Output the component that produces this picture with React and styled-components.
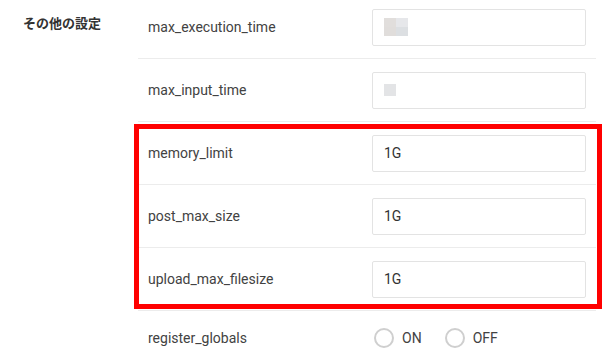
import React from 'react';
import styled, { createGlobalStyle } from 'styled-components';

const GlobalStyle = createGlobalStyle`
  html, body {
    margin: 0;
    padding: 0;
    background: #ffffff;
  }
  body {
    font-family: Roboto, "Noto Sans CJK JP", sans-serif;
    color: #333333;
    overflow: hidden;
  }
`;

const Page = styled.div`
  display: flex;
  width: 607px;
  margin-top: -4px;
`;

const SectionTitle = styled.div`
  width: 138px;
  flex-shrink: 0;
  box-sizing: border-box;
  padding: 17px 0 0 23px;
  font-family: "Noto Sans CJK JP", sans-serif;
  font-size: 13px;
  font-weight: 700;
  line-height: 19px;
  color: #333333;
`;

const Rows = styled.div`
  width: 458px;
  display: flex;
  flex-direction: column;
`;

const Row = styled.div`
  display: flex;
  box-sizing: border-box;
  height: 63px;
  padding: ${(p) => (p.$radio ? '17px 10px 0' : '0 10px')};
  align-items: ${(p) => (p.$radio ? 'flex-start' : 'center')};
  border-bottom: 1px solid #ececec;
`;

const Label = styled.div`
  width: 224px;
  flex-shrink: 0;
  font-size: 14px;
  line-height: 20px;
  color: #424242;
`;

const Input = styled.div`
  width: 214px;
  height: 37px;
  box-sizing: border-box;
  border: 1px solid #e3e3e3;
  border-radius: 2px;
  display: flex;
  align-items: center;
  padding-left: 11px;
  font-size: 14px;
  color: #333333;
`;

const Redacted = styled.div`
  display: grid;
  grid-template-columns: repeat(${(p) => p.$cols}, 12px);
  grid-auto-rows: ${(p) => p.$h}px;
`;

const Pixel = styled.span`
  background: ${(p) => p.$c};
`;

const Highlight = styled.div`
  position: relative;

  &::after {
    content: '';
    position: absolute;
    top: 2px;
    left: -4px;
    right: -6px;
    bottom: 2px;
    border: 5px solid #ff0000;
    pointer-events: none;
  }
`;

const RadioGroup = styled.div`
  display: flex;
  align-items: center;
`;

const RadioOption = styled.label`
  display: flex;
  align-items: center;
  gap: 8px;
  margin-right: 23px;
  font-size: 14px;
  line-height: 20px;
  color: #424242;
`;

const Circle = styled.span`
  width: 20px;
  height: 20px;
  box-sizing: border-box;
  border: 2px solid #cfcfcf;
  border-radius: 50%;
  background: #ffffff;
  margin-left: ${(p) => (p.$first ? '2px' : '0')};
`;

const App = () => {
  return (
    <>
      <GlobalStyle />
      <Page>
        <SectionTitle>その他の設定</SectionTitle>
        <Rows>
          <Row>
            <Label>max_execution_time</Label>
            <Input>
              <Redacted $cols={2} $h={9}>
                <Pixel $c="#e1dedc" />
                <Pixel $c="#e6e7ea" />
                <Pixel $c="#e0dddb" />
                <Pixel $c="#dcdfe2" />
              </Redacted>
            </Input>
          </Row>
          <Row>
            <Label>max_input_time</Label>
            <Input>
              <Redacted $cols={1} $h={12}>
                <Pixel $c="#e3e4e6" />
              </Redacted>
            </Input>
          </Row>
          <Highlight>
            <Row>
              <Label>memory_limit</Label>
              <Input>1G</Input>
            </Row>
            <Row>
              <Label>post_max_size</Label>
              <Input>1G</Input>
            </Row>
            <Row>
              <Label>upload_max_filesize</Label>
              <Input>1G</Input>
            </Row>
          </Highlight>
          <Row $radio>
            <Label>register_globals</Label>
            <RadioGroup>
              <RadioOption>
                <Circle $first />
                ON
              </RadioOption>
              <RadioOption>
                <Circle />
                OFF
              </RadioOption>
            </RadioGroup>
          </Row>
        </Rows>
      </Page>
    </>
  );
};

export default App;
